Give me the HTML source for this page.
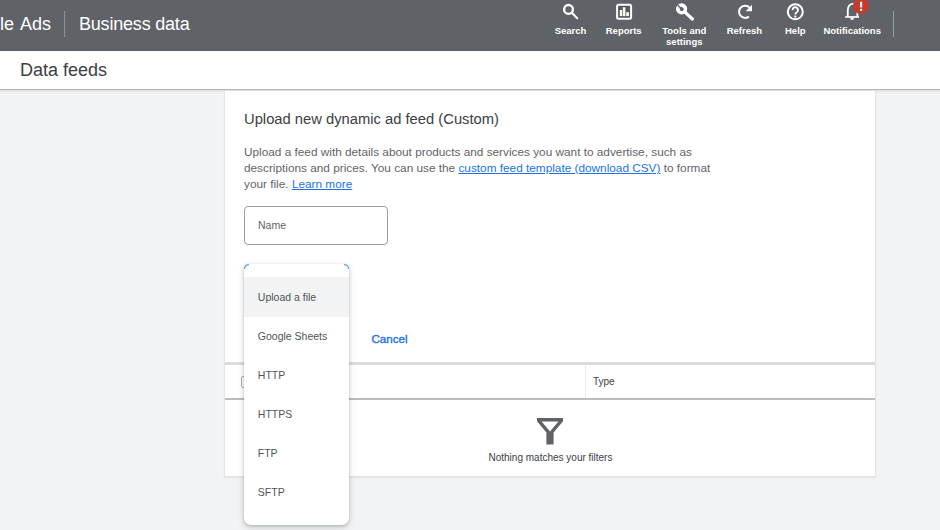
<!DOCTYPE html>
<html><head><meta charset="utf-8">
<style>
*{box-sizing:border-box;margin:0;padding:0}
html,body{width:940px;height:530px;overflow:hidden;background:#f1f3f4;font-family:"Liberation Sans",sans-serif;position:relative}
.a{position:absolute;white-space:nowrap;line-height:1}
#hdr{left:0;top:0;width:940px;height:51px;background:#5f6368}
.ht{color:#fff;font-size:18px}
.sep{width:1px;background:#8d9094}
.nl{color:#fff;font-size:9.5px;font-weight:bold;text-align:center;width:80px}
#sub{left:0;top:51px;width:940px;height:38px;background:#fff;box-shadow:0 1px 1px rgba(60,64,67,.28),0 1px 3px 1px rgba(60,64,67,.1)}
#card{left:224px;top:91px;width:652px;height:386px;background:#fff;border:1px solid #e3e4e6;border-top:none;box-shadow:0 1px 1px rgba(60,64,67,.08)}
.desc{color:#5f6368;font-size:11.8px;line-height:16px}
.desc a{color:#1a73e8;text-decoration:underline}
#inp{left:244px;top:206px;width:144px;height:39px;border:1px solid #9aa0a6;border-radius:4px}
#menu{left:244px;top:264px;width:105px;height:261px;background:#fff;border-radius:5px 5px 7px 7px;box-shadow:0 1px 3px rgba(60,64,67,.3),0 3px 6px 1px rgba(60,64,67,.12)}
.mi{color:#505357;font-size:10.5px;left:257.8px}
</style></head>
<body>
<div id="hdr" class="a">
  <div class="a ht" style="left:0;top:15px;word-spacing:2px">le Ads</div>
  <div class="a sep" style="left:64px;top:11px;height:26px"></div>
  <div class="a ht" style="left:79px;top:15px;letter-spacing:-0.2px">Business data</div>
  <div class="a sep" style="left:893px;top:11px;height:26px;background:#9aa0a6"></div>

  <!-- search -->
  <svg class="a" style="left:558px;top:0" width="25" height="24" viewBox="0 0 25 24">
    <circle cx="10.5" cy="9.4" r="4.4" fill="none" stroke="#fff" stroke-width="2.3"/>
    <path d="M13.8 12.8 L19.2 18.2" stroke="#fff" stroke-width="2.2" stroke-linecap="round"/>
  </svg>
  <div class="a nl" style="left:530.5px;top:26px">Search</div>

  <!-- reports -->
  <svg class="a" style="left:611px;top:0" width="26" height="24" viewBox="0 0 26 24">
    <rect x="6.1" y="4.8" width="14" height="14" rx="1.5" fill="#55595d" stroke="#fff" stroke-width="2"/>
    <rect x="8.8" y="10" width="2.4" height="6.1" fill="#fff"/>
    <rect x="11.8" y="7.3" width="2.6" height="8.8" fill="#fff"/>
    <rect x="15.2" y="12.2" width="2.7" height="3.9" fill="#fff"/>
  </svg>
  <div class="a nl" style="left:583.7px;top:26px">Reports</div>

  <!-- tools -->
  <svg class="a" style="left:672px;top:0" width="26" height="24" viewBox="0 0 26 24">
    <path d="M12.4 11.6 L20.4 19" stroke="#fff" stroke-width="3.3" stroke-linecap="round"/>
    <circle cx="9.6" cy="8.9" r="3.8" fill="none" stroke="#fff" stroke-width="3.6"/>
    <path d="M5.4 4.7 L9.4 8.7" stroke="#5f6368" stroke-width="1.5"/>
    <circle cx="10" cy="9.3" r="1.5" fill="#5f6368"/>
  </svg>
  <div class="a nl" style="left:644.3px;top:26px">Tools and</div>
  <div class="a nl" style="left:644.3px;top:37px">settings</div>

  <!-- refresh -->
  <svg class="a" style="left:732px;top:0" width="26" height="24" viewBox="0 0 26 24">
    <path d="M16.9 16.6 A6.1 6.1 0 1 1 17.6 7.6" fill="none" stroke="#fff" stroke-width="2"/>
    <path d="M20 4.8 L20 11.2 L13.6 11.2 Z" fill="#fff"/>
  </svg>
  <div class="a nl" style="left:704.4px;top:26px">Refresh</div>

  <!-- help -->
  <svg class="a" style="left:782px;top:0" width="26" height="24" viewBox="0 0 26 24">
    <circle cx="13.3" cy="11.8" r="7.5" fill="none" stroke="#fff" stroke-width="2"/>
    <path d="M10.6 10.2 A2.7 2.7 0 1 1 15.4 11.6 C14.4 12.6 13.3 13 13.3 14.6" fill="none" stroke="#fff" stroke-width="1.9"/>
    <rect x="12.3" y="15.6" width="2" height="1.9" fill="#fff"/>
  </svg>
  <div class="a nl" style="left:755.3px;top:26px">Help</div>

  <!-- notifications -->
  <svg class="a" style="left:840px;top:0" width="34" height="24" viewBox="0 0 34 24">
    <path d="M7.8 16.4 V10 A4.8 6.2 0 0 1 17.4 10 V16.4" fill="none" stroke="#fff" stroke-width="1.8"/>
    <rect x="5.2" y="16.1" width="13.8" height="1.7" fill="#fff"/>
    <path d="M10.2 17.8 H14 A1.9 2.2 0 0 1 10.2 17.8 Z" fill="#fff"/>
    <circle cx="21" cy="6" r="8" fill="#c6392b"/>
    <rect x="20" y="1.8" width="2.2" height="5.6" fill="#fff"/>
    <rect x="20" y="8.8" width="2.2" height="2.1" fill="#fff"/>
  </svg>
  <div class="a nl" style="left:812.2px;top:26px">Notifications</div>
</div>

<div id="sub" class="a"></div>
<div class="a" style="left:20px;top:61px;font-size:18px;color:#3c4043">Data feeds</div>

<div id="card" class="a"></div>
<div class="a" style="left:244px;top:112px;font-size:14.75px;color:#3c4043">Upload new dynamic ad feed (Custom)</div>
<div class="a desc" style="left:244px;top:144px">Upload a feed with details about products and services you want to advertise, such as<br>descriptions and prices. You can use the <a>custom feed template (download CSV)</a> to format<br>your file. <a>Learn more</a></div>
<div id="inp" class="a"></div>
<div class="a" style="left:258px;top:220px;font-size:10.5px;color:#5f6368">Name</div>
<div class="a" style="left:371.5px;top:332.8px;font-size:11.6px;color:#1a73e8;-webkit-text-stroke:0.35px #1a73e8">Cancel</div>

<!-- table -->
<div class="a" style="left:225px;top:362px;width:650px;height:3px;background:#dadce0"></div>
<div class="a" style="left:241px;top:375.5px;width:12px;height:12px;border:1px solid #a8acb1;border-radius:2px;background:#fff"></div>
<div class="a" style="left:585px;top:365px;width:1px;height:33px;background:#e8eaed"></div>
<div class="a" style="left:593px;top:376.5px;font-size:10px;color:#3c4043">Type</div>
<div class="a" style="left:225px;top:398px;width:650px;height:2px;background:#b9bcc0"></div>
<svg class="a" style="left:536px;top:417px" width="28" height="29" viewBox="0 0 28 29">
  <path d="M1 1 H27 V4.2 L17.6 15.4 V27.6 H10.4 V15.4 L1 4.2 Z M5.6 4.6 L14 14.4 L22.4 4.6 Z" fill="#5f6368" fill-rule="evenodd"/>
</svg>
<div class="a" style="left:488.5px;top:453.2px;font-size:10px;color:#3c4043">Nothing matches your filters</div>

<!-- menu -->
<div id="menu" class="a"></div>
<div class="a" style="left:244px;top:277px;width:105px;height:40px;background:#f1f3f4"></div>
<div class="a mi" style="top:292px">Upload a file</div>
<div class="a mi" style="top:331px">Google Sheets</div>
<div class="a mi" style="top:370px">HTTP</div>
<div class="a mi" style="top:409px">HTTPS</div>
<div class="a mi" style="top:448px">FTP</div>
<div class="a mi" style="top:487px">SFTP</div>
<svg class="a" style="left:240px;top:260px" width="114" height="14" viewBox="0 0 114 14">
  <path d="M4.5 9 A4.5 4.5 0 0 1 9 4.5" fill="none" stroke="#6aa2f3" stroke-width="1.3"/>
  <path d="M104 4.5 A4.5 4.5 0 0 1 108.5 9" fill="none" stroke="#6aa2f3" stroke-width="1.3"/>
</svg>
</body></html>
